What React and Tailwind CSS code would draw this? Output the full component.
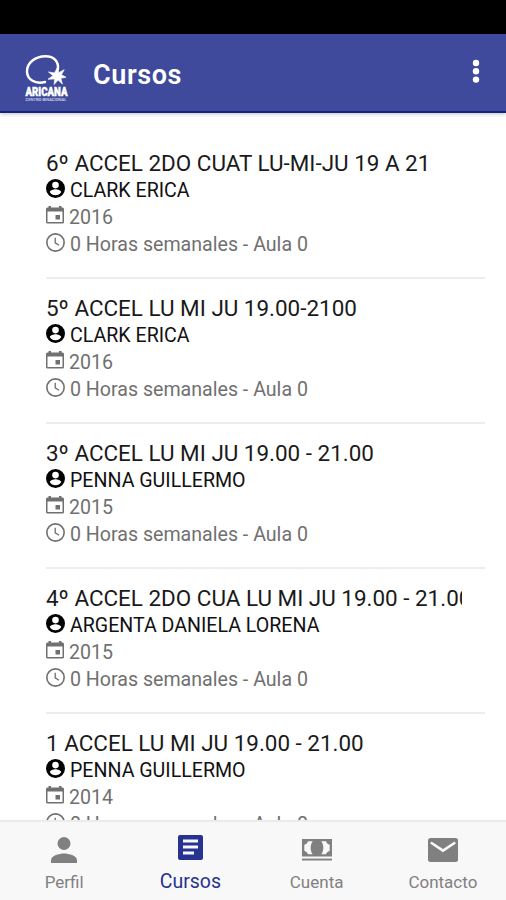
import React, { useState } from 'react';

const courses = [
  { id: 1, name: '6º ACCEL 2DO CUAT LU-MI-JU 19 A 21', teacher: 'CLARK ERICA', year: 2016 },
  { id: 2, name: '5º ACCEL LU MI JU 19.00-2100', teacher: 'CLARK ERICA', year: 2016 },
  { id: 3, name: '3º ACCEL LU MI JU 19.00 - 21.00', teacher: 'PENNA GUILLERMO', year: 2015 },
  { id: 4, name: '4º ACCEL 2DO CUA LU MI JU 19.00 - 21.00', teacher: 'ARGENTA DANIELA LORENA', year: 2015 },
  { id: 5, name: '1 ACCEL LU MI JU 19.00 - 21.00', teacher: 'PENNA GUILLERMO', year: 2014 },
];

const ContactIcon = () => (
  <svg viewBox="0 0 20 20" className="mb-[5px] h-[19px] w-[19px] shrink-0 fill-black">
    <path
      fillRule="evenodd"
      d="M10 0a10 10 0 1 0 0 20 10 10 0 0 0 0-20Zm0 2.900a3.500 3.500 0 1 1 0 7 3.500 3.500 0 0 1 0-7Zm0 14.200a7 7 0 0 1-6-3.400c0-1.900 4-3 6-3s6 1.100 6 3a7 7 0 0 1-6 3.400Z"
    />
  </svg>
);

const CalendarIcon = () => (
  <svg viewBox="0 0 18 18" className="mb-[5px] h-[18px] w-[18px] shrink-0 fill-[#707070]">
    <path
      fillRule="evenodd"
      d="M2.500 0h2.500v1.500h8V0h2.500v1.500H16.500a1.500 1.500 0 0 1 1.500 1.500V16a1.500 1.500 0 0 1-1.500 1.500H1.500A1.500 1.500 0 0 1 0 16V3a1.500 1.500 0 0 1 1.500-1.500h1ZM1.500 5.500V16h15V5.500Z"
    />
    <rect x="9.500" y="9" width="4.500" height="4.500" />
  </svg>
);

const ClockIcon = () => (
  <svg viewBox="0 0 20 20" className="mb-[5px] h-[19px] w-[19px] shrink-0 fill-none stroke-[#707070]">
    <circle cx="10" cy="10" r="9.100" strokeWidth="1.700" />
    <path d="M9.700 5v5.400l4 2.500" strokeWidth="1.400" />
  </svg>
);

const PersonIcon = () => (
  <svg viewBox="0 0 26 26" className="h-[26px] w-[26px] fill-current">
    <circle cx="13" cy="6.500" r="6.500" />
    <path d="M0 26v-3c0-4.400 8.500-6.500 13-6.500s13 2.100 13 6.500v3Z" />
  </svg>
);

const PaperIcon = () => (
  <svg viewBox="0 0 25 25" className="h-[25px] w-[25px] fill-current">
    <path
      fillRule="evenodd"
      d="M2 0h21a2 2 0 0 1 2 2v21a2 2 0 0 1-2 2H2a2 2 0 0 1-2-2V2a2 2 0 0 1 2-2Zm3 4.500v3h15v-3Zm0 6v3h15v-3Zm0 6v3h11v-3Z"
    />
  </svg>
);

const CashIcon = () => (
  <svg viewBox="0 0 30 22" className="h-[22px] w-[30px] fill-current">
    <path
      fillRule="evenodd"
      d="M0 0h30v17.500H0ZM6 2.200C5.500 4 4.200 5 2.300 5.800v6C4.200 12.600 5.500 13.600 6 15.300h4.700C8 12 8 5.500 10.700 2.200Zm13.300 0c2.700 3.300 2.700 9.800 0 13.100H24c.5-1.700 1.800-2.700 3.700-3.500v-6C25.800 5 24.500 4 24 2.200Z"
    />
    <rect y="19.600" width="30" height="1.900" />
  </svg>
);

const MailIcon = () => (
  <svg viewBox="0 0 30 24" className="h-[24px] w-[30px]">
    <rect width="30" height="24" rx="2.500" className="fill-current" />
    <path d="M2.800 4.500 15 12.600 27.200 4.500" className="fill-none stroke-[#f8f8f8]" strokeWidth="2.600" />
  </svg>
);

const Logo = () => (
  <svg viewBox="0 0 44 48" className="h-[48px] w-[44px] overflow-visible fill-white">
    <path
      d="M20 28C10 30.500 2.500 25.500 2 18 1.500 8.500 11 2.200 20.500 2.200c8.500 0 13.500 5.300 12.300 13.300"
      className="fill-none stroke-white"
      strokeWidth="2.500"
      strokeLinecap="round"
    />
    <path
      d="m32.500 13.500 1.200 5.200 5.500-3-2.800 5 4.600 2.600-5.200.9 1.600 5.800-4.300-4-4 4.500.6-5.600-6.700.3 5-3.500-4.500-3.700 6 .9Z"
      className="stroke-white"
      strokeWidth="0.700"
    />
    <text
      x="0.500"
      y="41.500"
      textLength="42"
      lengthAdjust="spacingAndGlyphs"
      className="stroke-white font-['Roboto',sans-serif] text-[13px] font-black"
      strokeWidth="0.500"
    >
      ARICANA
    </text>
    <text x="0.500" y="46.500" textLength="41" lengthAdjust="spacingAndGlyphs" opacity="0.800" className="font-['Roboto',sans-serif] text-[4px] font-medium">
      CENTRO BINACIONAL
    </text>
  </svg>
);

const tabs = [
  { id: 'perfil', label: 'Perfil', icon: PersonIcon },
  { id: 'cursos', label: 'Cursos', icon: PaperIcon },
  { id: 'cuenta', label: 'Cuenta', icon: CashIcon },
  { id: 'contacto', label: 'Contacto', icon: MailIcon },
];

const CourseItem = ({ course }) => (
  <li className="ml-[46px] mr-[21px] h-[145px] border-b-2 border-[#ececec] pt-[15px] text-[19.600px] text-[#707070]">
    <h2 className="mr-[23px] overflow-hidden whitespace-nowrap text-[22.450px] leading-[28px] text-[#1a1a1a]">
      {course.name}
    </h2>
    <div className="flex h-[27px] items-center gap-[5px] text-[#111]">
      <ContactIcon />
      <span>{course.teacher}</span>
    </div>
    <div className="flex h-[27px] items-center gap-[5px]">
      <CalendarIcon />
      <span>{course.year}</span>
    </div>
    <div className="flex h-[27px] items-center gap-[5px]">
      <ClockIcon />
      <span>0 Horas semanales - Aula 0</span>
    </div>
  </li>
);

const App = () => {
  const [activeTab, setActiveTab] = useState('cursos');

  return (
    <div className="flex h-[900px] w-[506px] flex-col overflow-hidden bg-white font-['Roboto',sans-serif]">
      {/* Status bar */}
      <div className="h-[34px] shrink-0 bg-black" />

      {/* Header */}
      <header className="z-10 flex h-[79px] shrink-0 items-center border-b-2 border-[#112580] bg-[#3f4a9d] pl-[25px] pr-[26px] text-white shadow-[0_1px_4px_rgba(0,0,0,0.25)]">
        <div className="mt-[10px]">
          <Logo />
        </div>
        <h1 className="ml-[24px] mt-[4px] text-[27px] font-semibold leading-8 tracking-[0.6px]">Cursos</h1>
        <button className="-mt-[3px] ml-auto" aria-label="Menu">
          <svg viewBox="0 0 8 24" className="h-6 w-2 fill-white">
            <circle cx="4" cy="4" r="3.200" />
            <circle cx="4" cy="12.300" r="3.200" />
            <circle cx="4" cy="20.600" r="3.200" />
          </svg>
        </button>
      </header>

      {/* Courses */}
      <main className="min-h-0 flex-1 overflow-hidden pt-[21px]">
        <ul>
          {courses.map((course) => (
            <CourseItem key={course.id} course={course} />
          ))}
        </ul>
      </main>

      {/* Tabs */}
      <nav className="grid h-[80px] shrink-0 grid-cols-4 border-t-2 border-[#ebebeb] bg-[#f8f8f8] pl-px">
        {tabs.map(({ id, label, icon: Icon }) => (
          <button
            key={id}
            onClick={() => setActiveTab(id)}
            className={`flex flex-col items-center ${
              activeTab === id ? 'pt-[11px] text-[19.500px] text-[#263390]' : 'pt-[14px] text-[17px] text-[#808080]'
            }`}
          >
            <span className="flex h-[28px] items-center">
              <Icon />
            </span>
            <span className={`leading-[26px] ${activeTab === id ? 'mt-[8px]' : 'mt-[5px]'}`}>{label}</span>
          </button>
        ))}
      </nav>
    </div>
  );
};

export default App;
